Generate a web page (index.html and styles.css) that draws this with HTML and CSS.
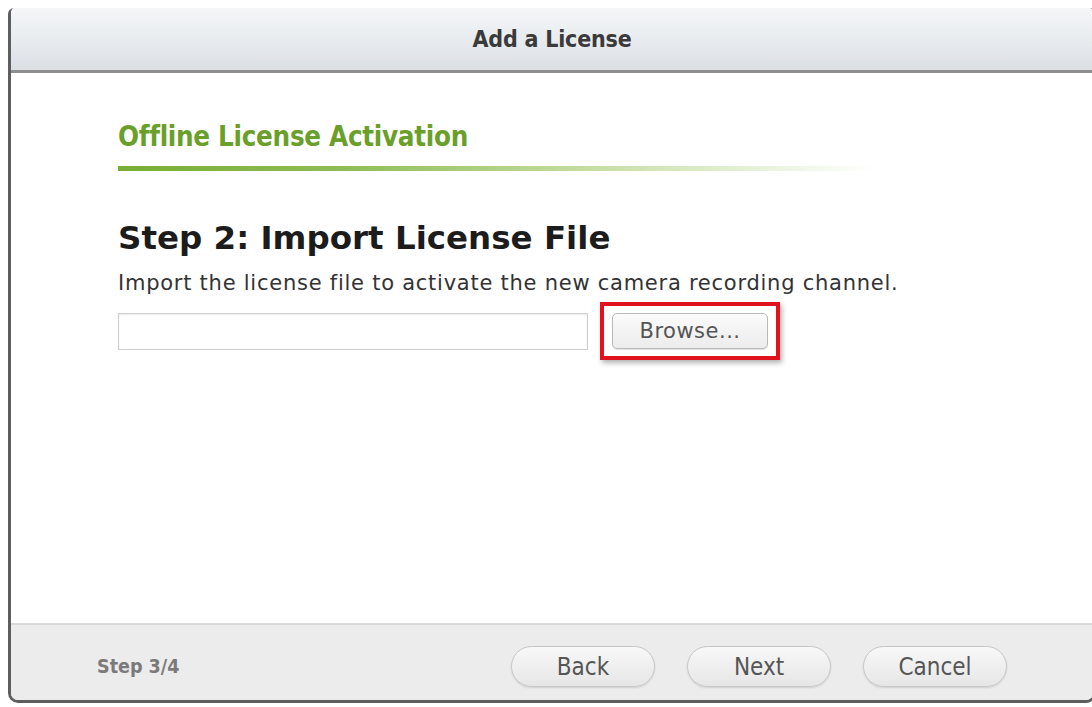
FILE: index.html
```html
<!DOCTYPE html>
<html lang="en">
<head>
<meta charset="utf-8">
<title>Add a License</title>
<link rel="stylesheet" href="styles.css">
</head>
<body>
<div class="dialog">
  <div class="header">
    <h1 class="title">Add a License</h1>
  </div>
  <div class="content">
    <h2 class="section">Offline License Activation</h2>
    <div class="rule"></div>
    <h3 class="step">Step 2: Import License File</h3>
    <p class="desc">Import the license file to activate the new camera recording channel.</p>
    <div class="file-row">
      <input class="file-input" type="text">
      <div class="highlight">
        <button class="browse" type="button">Browse...</button>
      </div>
    </div>
  </div>
  <div class="footer">
    <span class="progress">Step 3/4</span>
    <div class="actions">
      <button class="pill" type="button">Back</button>
      <button class="pill" type="button">Next</button>
      <button class="pill" type="button">Cancel</button>
    </div>
  </div>
</div>
</body>
</html>
```

FILE: styles.css
```css
html, body {
  margin: 0;
  padding: 0;
  background: #ffffff;
}

body {
  padding: 8px 0 4px 8px;
  height: 707px;
  box-sizing: border-box;
  overflow: hidden;
}

.dialog {
  height: 100%;
  margin-right: -4px;
  display: flex;
  flex-direction: column;
  border-left: 3px solid #5e5e5e;
  border-right: 3px solid #5e5e5e;
  border-bottom: 3px solid #5e5e5e;
  border-radius: 6px 6px 10px 10px;
  box-sizing: border-box;
  background: #ffffff;
  overflow: hidden;
}

.header {
  height: 62px;
  flex: none;
  display: flex;
  align-items: center;
  justify-content: center;
  background: linear-gradient(#f4f6f8, #e9ecef 50%, #dadfe4);
  border-bottom: 3px solid #8c8e90;
}

.title {
  margin: 0;
  font-family: "DejaVu Sans Condensed", "DejaVu Sans", sans-serif;
  font-stretch: condensed;
  font-weight: bold;
  font-size: 23px;
  color: #3a3a3a;
  letter-spacing: -0.2px;
}

.content {
  flex: 1;
  padding: 48px 0 0 107px;
}

.section {
  margin: 0;
  font-family: "DejaVu Sans Condensed", "DejaVu Sans", sans-serif;
  font-stretch: condensed;
  font-weight: bold;
  font-size: 27.5px;
  line-height: 30px;
  color: #6a9f2a;
  letter-spacing: -0.3px;
}

.rule {
  width: 755px;
  height: 5px;
  margin-top: 15px;
  background: linear-gradient(to right, #78ad35 0%, #8fbd55 30%, #c9e0a8 65%, rgba(255,255,255,0) 100%);
}

.step {
  margin: 47px 0 0 0;
  font-family: "DejaVu Sans", "Verdana", sans-serif;
  font-weight: bold;
  font-size: 32.5px;
  line-height: 40px;
  color: #1c1c1c;
}

.desc {
  margin: 12px 0 0 0;
  font-family: "DejaVu Sans", "Verdana", sans-serif;
  font-size: 21px;
  line-height: 26px;
  letter-spacing: 0.75px;
  color: #333333;
}

.file-row {
  display: flex;
  align-items: center;
  margin-top: 6px;
}

.file-input {
  width: 470px;
  height: 37px;
  box-sizing: border-box;
  border: 1px solid #cfcfcf;
  box-shadow: inset 0 1px 2px rgba(0,0,0,0.08);
  margin: 0;
  padding: 0 6px;
}

.highlight {
  margin-left: 12px;
  border: 4px solid #e1121d;
  padding: 7px 8px;
  box-shadow: 2px 3px 5px rgba(0,0,0,0.3);
}

.browse {
  display: block;
  width: 156px;
  height: 36px;
  border: 1px solid #b9b9b9;
  border-radius: 5px;
  background: linear-gradient(#fbfbfb, #ececec);
  box-shadow: 0 1px 1px rgba(0,0,0,0.12);
  font-family: "DejaVu Sans", "Verdana", sans-serif;
  font-size: 21px;
  letter-spacing: 0.5px;
  color: #555555;
  padding: 0;
}

.footer {
  height: 77px;
  flex: none;
  display: flex;
  align-items: center;
  justify-content: space-between;
  background: #ececec;
  border-top: 2px solid #d9d9d9;
  padding: 8px 86px 0 86px;
  box-sizing: border-box;
}

.progress {
  font-family: "DejaVu Sans Condensed", "DejaVu Sans", sans-serif;
  font-stretch: condensed;
  font-weight: bold;
  font-size: 19.5px;
  color: #7a7a7a;
}

.actions {
  display: flex;
  gap: 32px;
}

.pill {
  width: 144px;
  height: 41px;
  border: 1px solid #c6c6c6;
  border-radius: 21px;
  background: linear-gradient(#f8f8f8, #e6e6e6);
  box-shadow: 0 1px 2px rgba(0,0,0,0.12);
  font-family: "DejaVu Sans Condensed", "DejaVu Sans", sans-serif;
  font-stretch: condensed;
  font-size: 24px;
  color: #555555;
  padding: 0;
}
```
